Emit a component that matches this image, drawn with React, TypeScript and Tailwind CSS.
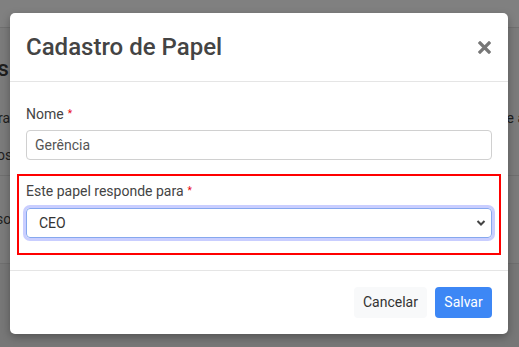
import React from 'react';

function Required() {
  return <span className="ml-1 text-[10px] align-top text-red-600">*</span>;
}

export default function App() {
  return (
    <div className="relative w-[519px] h-[347px] overflow-hidden bg-[#7b7b7b] font-['Roboto',sans-serif]">
      {/* page behind the overlay */}
      <div className="flex flex-col text-[#1e1e1e]">
        <div className="h-[28px] border-b border-[#707070] bg-[#808080]" />
        <div className="flex justify-between items-center h-[72px] pt-[8px]">
          <span className="text-[22px] font-medium -ml-[8px]">is</span>
          <span />
        </div>
        <div className="flex justify-between items-center h-[36px] text-[14px]">
          <span className="-ml-[2px]">ra</span>
          <span className="-mr-[6px]">e a</span>
        </div>
        <div className="flex items-center h-[40px] text-[14px] border-b border-[#6f6f6f]">
          <span className="-ml-[3px]">os</span>
        </div>
        <div className="flex items-center h-[88px] text-[14px] border-b border-[#6f6f6f]">
          <span className="-ml-[4px]">so</span>
        </div>
        <div className="h-[90px] bg-[#777777]" />
      </div>

      {/* modal */}
      <div className="absolute left-[10px] top-[13px] w-[498px] rounded-[5px] bg-white shadow-[0_3px_8px_rgba(0,0,0,0.3)]">
        <div className="flex items-center justify-between px-4 py-4 border-b border-[#e5e5e5]">
          <h2 className="text-[24px] leading-[36px] font-medium text-[#444]">Cadastro de Papel</h2>
          <svg width="13" height="13" viewBox="0 0 13 13" className="mr-[1px]">
            <path d="M2 2 L11 11 M11 2 L2 11" stroke="#777" strokeWidth="3.2" strokeLinecap="square" />
          </svg>
        </div>

        <div className="px-4 pt-[22px] pb-[15px] text-[14px] text-[#444]">
          <label className="block leading-[20px] mb-[6px]">
            Nome<Required />
          </label>
          <div className="h-[30px] rounded-[4px] border border-[#d0d0d0] px-[8px] flex items-center text-[#555]">
            Gerência
          </div>

          <div className="mt-[14px] -mx-[9px] border-2 border-[#ff0000] px-[7px] pt-[5px] pb-[15px]">
            <label className="block leading-[20px] mb-[7px]">
              Este papel responde para<Required />
            </label>
            <div className="h-[30px] rounded-[4px] border border-[#86a8ee] ring-[3px] ring-[#c9ceff] pl-[12px] pr-[5px] flex items-center justify-between text-[#333]">
              <span>CEO</span>
              <svg width="10" height="8" viewBox="0 0 10 8">
                <path d="M1.5 2 L5 5.5 L8.5 2" fill="none" stroke="#444" strokeWidth="2" />
              </svg>
            </div>
          </div>
        </div>

        <div className="flex justify-end gap-2 px-4 py-4 border-t border-[#e5e5e5] text-[14px]">
          <button className="h-[31px] w-[73px] rounded-[4px] bg-[#f8f9fa] text-[#333]">Cancelar</button>
          <button className="h-[31px] w-[57px] rounded-[4px] bg-[#3d87f5] text-white">Salvar</button>
        </div>
      </div>
    </div>
  );
}
